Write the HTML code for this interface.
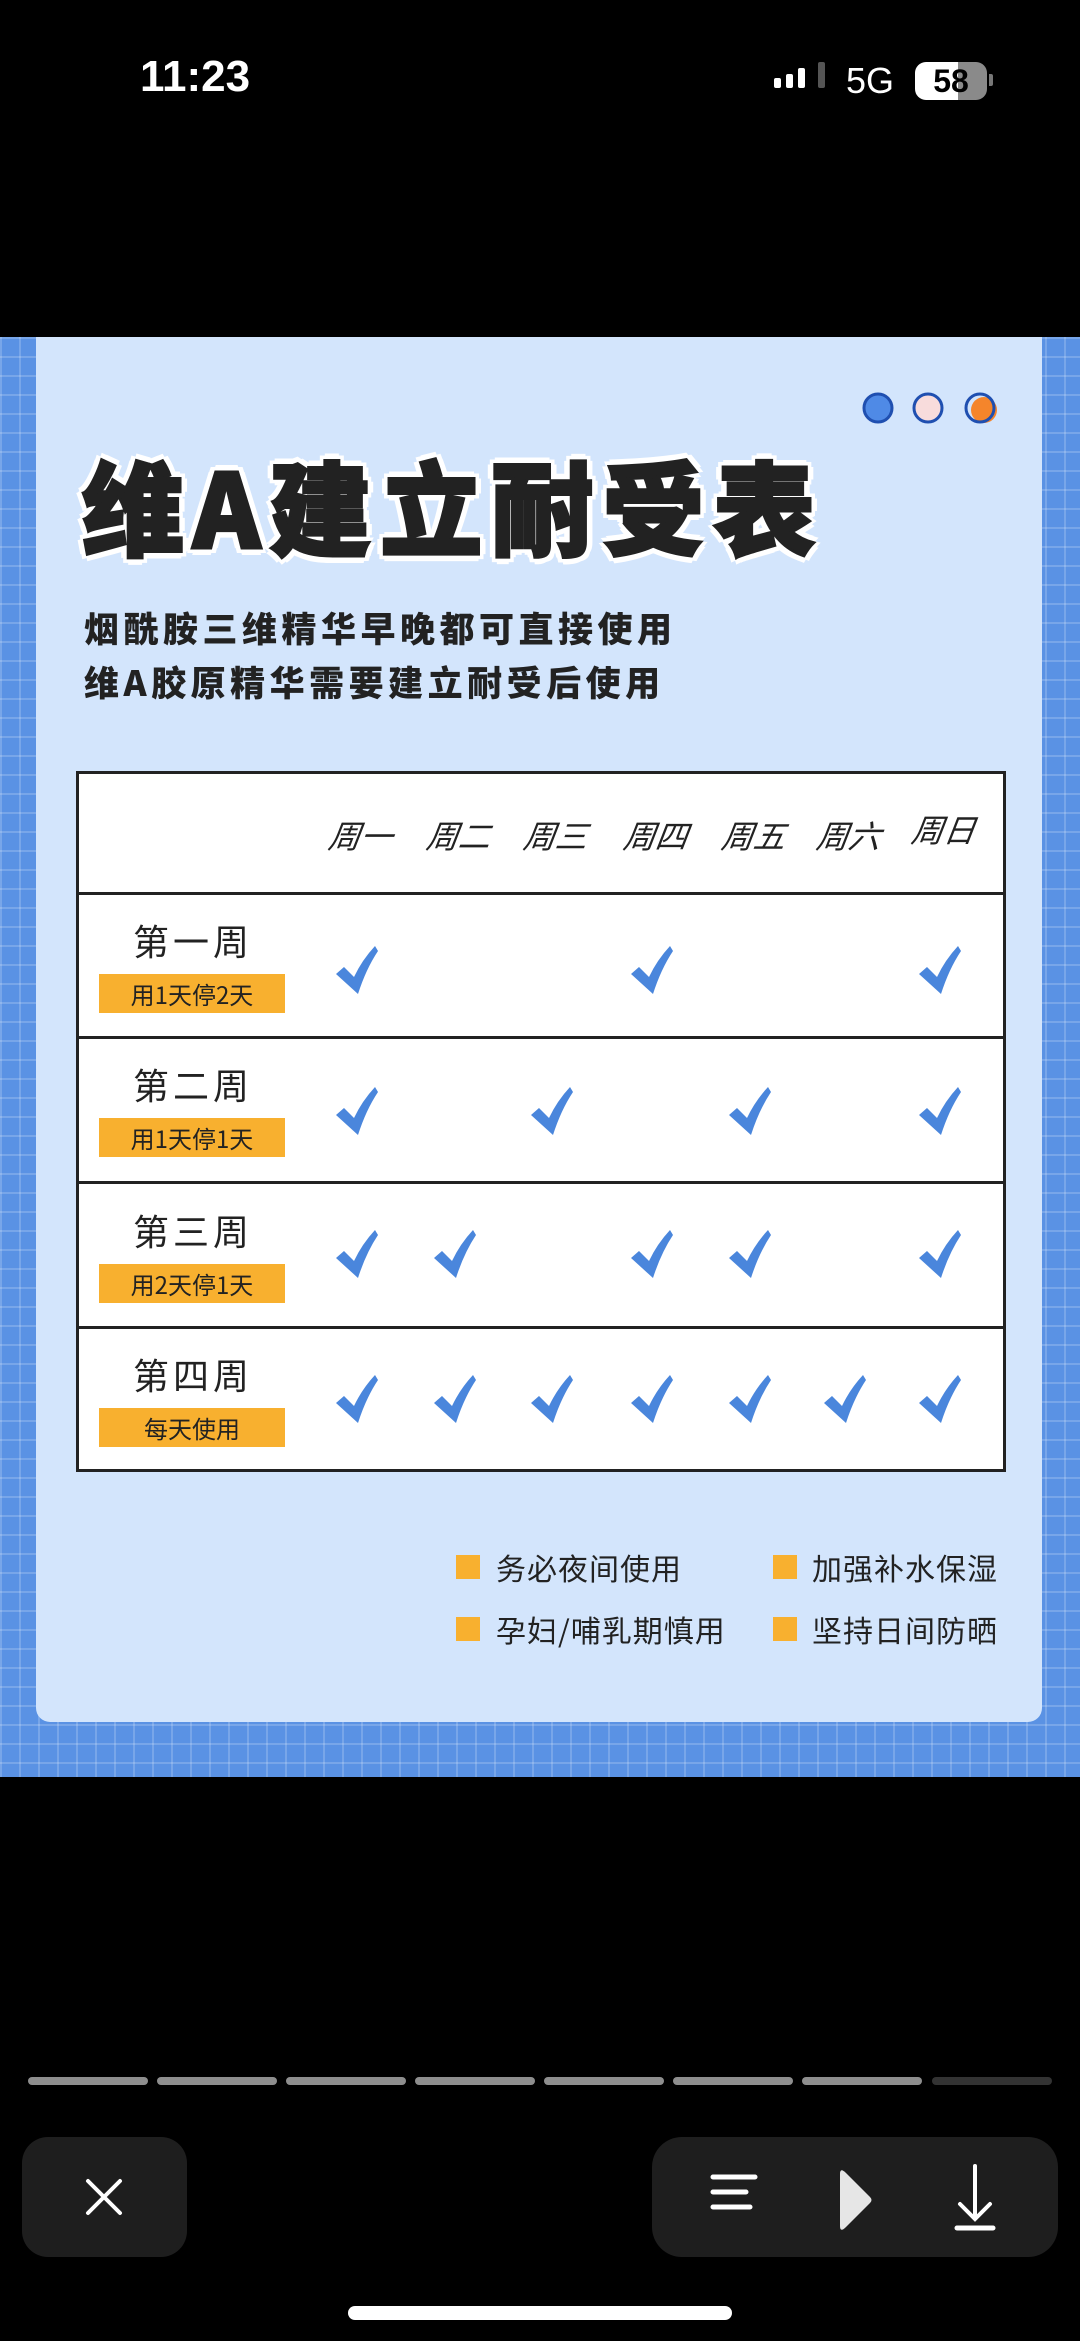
<!DOCTYPE html>
<html><head><meta charset="utf-8"><style>
*{margin:0;padding:0;box-sizing:border-box}
body{width:1080px;height:2341px;background:#000;position:relative;overflow:hidden;font-family:"Liberation Sans","Noto Sans CJK SC",sans-serif}
.abs{position:absolute}
.img{left:0;top:337px;width:1080px;height:1440px;background-color:#5a92e4;background-image:linear-gradient(rgba(255,255,255,.18) 2px,transparent 2px),linear-gradient(90deg,rgba(255,255,255,.18) 2px,transparent 2px);background-size:19px 19px}
.card{left:36px;top:337px;width:1006px;height:1385px;background:#d3e5fc;border-radius:0 0 14px 14px}
.title{left:82px;top:440px;font-family:"Noto Sans CJK SC",sans-serif;font-weight:900;font-size:102px;letter-spacing:9px;color:#222;-webkit-text-stroke:3px #222;text-shadow:5px 5px 0 #fff,-5px -5px 0 #fff,5px -5px 0 #fff,-5px 5px 0 #fff,7px 0 0 #fff,-7px 0 0 #fff,0 7px 0 #fff,0 -7px 0 #fff;line-height:130px;white-space:nowrap}
.sub{left:84px;font-family:"Noto Sans CJK SC",sans-serif;font-weight:900;font-size:35px;letter-spacing:4.5px;color:#222;white-space:nowrap}
.table{left:76px;top:771px;width:930px;height:701px;background:#fff;border:3px solid #222}
.hl{left:0;width:924px;height:3px;background:#222}
.day{font-size:32px;font-style:italic;color:#222;transform:translateX(-50%) skewX(-8deg);font-family:"Noto Sans CJK SC",sans-serif;white-space:nowrap}
.wk{font-size:36px;color:#222;font-family:"Noto Sans CJK SC",sans-serif;transform:translateX(-50%);letter-spacing:4px;white-space:nowrap}
.tag{left:20px;width:186px;height:39px;background:#f8b02f;font-size:24px;color:#222;text-align:center;line-height:39px;font-family:"Noto Sans CJK SC",sans-serif}
.sq{width:24px;height:24px;background:#f8b02f}
.lg{font-size:30px;color:#222;font-family:"Noto Sans CJK SC",sans-serif;letter-spacing:1px;white-space:nowrap}
.seg{top:2077px;height:8px;border-radius:4px;background:#8e8e8e;width:120px}
</style></head><body>
<div class="abs" style="left:140px;top:52px;color:#fff;font-size:44px;font-weight:bold">11:23</div>
<div class="abs" style="left:774px;top:78px;width:7px;height:10px;background:#fff;border-radius:2px"></div>
<div class="abs" style="left:786px;top:74px;width:7px;height:14px;background:#fff;border-radius:2px"></div>
<div class="abs" style="left:798px;top:68px;width:7px;height:20px;background:#fff;border-radius:2px"></div>
<div class="abs" style="left:818px;top:62px;width:7px;height:26px;background:#555;border-radius:2px"></div>
<div class="abs" style="left:846px;top:60px;color:#fff;font-size:36px">5G</div>
<div class="abs" style="left:915px;top:62px;width:72px;height:38px;border-radius:11px;background:linear-gradient(90deg,#fff 0 60%,#8a8a8a 60%);color:#000;font-weight:bold;font-size:32px;text-align:center;line-height:38px">58</div>
<div class="abs" style="left:989px;top:74px;width:4px;height:12px;background:#777;border-radius:0 2px 2px 0"></div>

<div class="abs img"></div>
<div class="abs card"></div>
<svg class="abs" style="left:855px;top:390px" width="150" height="40">
<circle cx="23" cy="18" r="14" fill="#4f8ae6" stroke="#1f4fb0" stroke-width="3"/>
<circle cx="73" cy="18" r="14" fill="#f8dcdc" stroke="#1f4fb0" stroke-width="3"/>
<circle cx="129" cy="20" r="13" fill="#f5852b"/>
<circle cx="125" cy="18" r="14" fill="none" stroke="#1f4fb0" stroke-width="3"/>
</svg>
<div class="abs title">维A建立耐受表</div>
<div class="abs sub" style="top:602px">烟酰胺三维精华早晚都可直接使用</div>
<div class="abs sub" style="top:656px">维A胶原精华需要建立耐受后使用</div>

<div class="abs table">
<div class="abs hl" style="top:118px"></div>
<div class="abs hl" style="top:262px"></div>
<div class="abs hl" style="top:407px"></div>
<div class="abs hl" style="top:552px"></div>
<div class="abs day" style="left:282px;top:38px">周一</div>
<div class="abs day" style="left:380px;top:38px">周二</div>
<div class="abs day" style="left:477px;top:38px">周三</div>
<div class="abs day" style="left:577px;top:38px">周四</div>
<div class="abs day" style="left:675px;top:38px">周五</div>
<div class="abs day" style="left:770px;top:38px">周六</div>
<div class="abs day" style="left:865px;top:32px">周日</div>

<div class="abs wk" style="left:114px;top:140px">第一周</div><div class="abs tag" style="top:200px">用1天停2天</div>
<div class="abs wk" style="left:114px;top:284px">第二周</div><div class="abs tag" style="top:344px">用1天停1天</div>
<div class="abs wk" style="left:114px;top:430px">第三周</div><div class="abs tag" style="top:490px">用2天停1天</div>
<div class="abs wk" style="left:114px;top:574px">第四周</div><div class="abs tag" style="top:634px">每天使用</div>
</div>
<svg class="abs" style="left:0;top:0" width="1080" height="1500">
<defs><path id="c" d="M-22 2 L-14 -5 L-4 5 Q4 -12 17 -26 L20 -21 Q8 -3 0 22 Z" fill="#4a86dc"/></defs>
<use href="#c" x="358" y="972"/><use href="#c" x="653" y="972"/><use href="#c" x="941" y="972"/>
<use href="#c" x="358" y="1113"/><use href="#c" x="553" y="1113"/><use href="#c" x="751" y="1113"/><use href="#c" x="941" y="1113"/>
<use href="#c" x="358" y="1256"/><use href="#c" x="456" y="1256"/><use href="#c" x="653" y="1256"/><use href="#c" x="751" y="1256"/><use href="#c" x="941" y="1256"/>
<use href="#c" x="358" y="1401"/><use href="#c" x="456" y="1401"/><use href="#c" x="553" y="1401"/><use href="#c" x="653" y="1401"/><use href="#c" x="751" y="1401"/><use href="#c" x="846" y="1401"/><use href="#c" x="941" y="1401"/>
</svg>

<div class="abs sq" style="left:456px;top:1555px"></div><div class="abs lg" style="left:496px;top:1545px">务必夜间使用</div>
<div class="abs sq" style="left:773px;top:1555px"></div><div class="abs lg" style="left:812px;top:1545px">加强补水保湿</div>
<div class="abs sq" style="left:456px;top:1617px"></div><div class="abs lg" style="left:496px;top:1607px">孕妇/哺乳期慎用</div>
<div class="abs sq" style="left:773px;top:1617px"></div><div class="abs lg" style="left:812px;top:1607px">坚持日间防晒</div>

<div class="abs seg" style="left:28px"></div><div class="abs seg" style="left:157px"></div><div class="abs seg" style="left:286px"></div><div class="abs seg" style="left:415px"></div><div class="abs seg" style="left:544px"></div><div class="abs seg" style="left:673px"></div><div class="abs seg" style="left:802px"></div><div class="abs seg" style="left:932px;background:#333"></div>

<div class="abs" style="left:22px;top:2137px;width:165px;height:120px;border-radius:26px;background:#1e1e1e"></div>
<svg class="abs" style="left:84px;top:2177px" width="40" height="40"><path d="M4 4L36 36M36 4L4 36" stroke="#fff" stroke-width="4" stroke-linecap="round"/></svg>
<div class="abs" style="left:652px;top:2137px;width:406px;height:120px;border-radius:30px;background:#1e1e1e"></div>
<svg class="abs" style="left:700px;top:2160px" width="320" height="80">
<path d="M13 17H55M13 32H46M13 47H50" stroke="#fff" stroke-width="5" stroke-linecap="round"/>
<path d="M140 14 Q140 7 146 13 L170 37 Q173 40 170 43 L146 67 Q140 73 140 66 Z" fill="#e6e6e6"/>
<path d="M275 6V58M260 44L275 59L290 44" stroke="#fff" stroke-width="4" fill="none" stroke-linecap="round"/>
<path d="M257 68H293" stroke="#fff" stroke-width="5" stroke-linecap="round"/>
</svg>
<div class="abs" style="left:348px;top:2306px;width:384px;height:14px;border-radius:7px;background:#fff"></div>
</body></html>
